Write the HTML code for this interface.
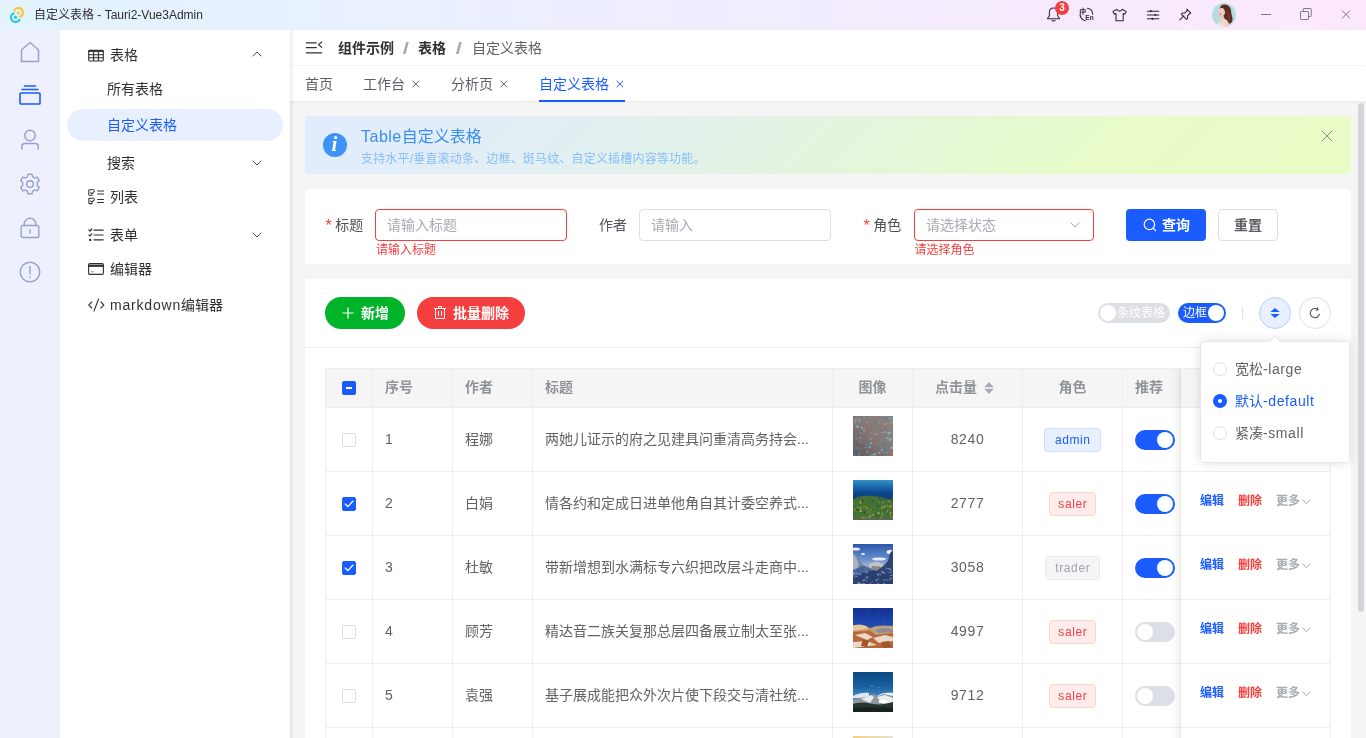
<!DOCTYPE html>
<html lang="zh-CN">
<head>
<meta charset="utf-8">
<title>自定义表格 - Tauri2-Vue3Admin</title>
<style>
*{box-sizing:border-box;margin:0;padding:0}
html,body{width:1366px;height:738px;overflow:hidden;background:#f5f5f5}
body{font-family:"Liberation Sans","Noto Sans CJK SC",sans-serif;font-size:14px;color:#303133;position:relative;-webkit-font-smoothing:antialiased}
.abs{position:absolute}
svg{display:block}
/* ---------- title bar ---------- */
#titlebar{position:absolute;left:0;top:0;width:1366px;height:30px;background:linear-gradient(90deg,#e2f3fe 0%,#efedfd 52%,#fce8fd 100%)}
#titlebar .ttl{position:absolute;left:34px;top:0;line-height:30px;font-size:12px;color:#2e2e30}
/* ---------- left icon bar ---------- */
#iconbar{position:absolute;left:0;top:30px;width:60px;height:708px;background:#eef0fe}
#iconbar svg{position:absolute}
/* ---------- side menu ---------- */
#sidemenu{position:absolute;left:60px;top:30px;width:230px;height:708px;background:#fff;z-index:3}
#sidemenu:after{content:"";position:absolute;left:230px;top:0;width:5px;height:708px;background:linear-gradient(90deg,rgba(0,0,0,.07),rgba(0,0,0,.02) 60%,rgba(0,0,0,0))}
#sidemenu .mi{position:absolute;font-size:14px;line-height:20px;color:#303133;white-space:nowrap}
#sidemenu .pill{position:absolute;left:7px;top:79px;width:216px;height:32px;border-radius:16px;background:#e8efff}
#sidemenu svg{position:absolute}
/* ---------- header ---------- */
#crumb{position:absolute;left:290px;top:30px;width:1076px;height:36px;background:#fff;border-bottom:1px solid #f6f6f6}
#crumb span{position:absolute;top:8px;line-height:20px;font-size:14px;white-space:nowrap}
#tabs{position:absolute;left:290px;top:66px;width:1076px;height:35px;background:#fff;box-shadow:0 1px 2px rgba(0,0,0,.06)}
#tabs span{position:absolute;top:8px;line-height:20px;font-size:14px;color:#5c5f66;white-space:nowrap}
#tabs svg{position:absolute}
/* ---------- content ---------- */
#alert{position:absolute;left:305px;top:116px;width:1046px;height:58px;border-radius:4px;background:linear-gradient(135deg,#e1ecff 0%,#e2f0f0 30%,#e4f5dc 52%,#e8fbc8 76%,#e9fcc5 100%)}
#search{position:absolute;left:305px;top:189px;width:1046px;height:75px;border-radius:4px;background:#fff}
#card{position:absolute;left:305px;top:279px;width:1046px;height:470px;border-radius:4px;background:#fff}
.lbl{position:absolute;font-size:14px;line-height:20px;color:#505257;white-space:nowrap}
.inp{position:absolute;height:32px;border:1px solid #dcdfe6;border-radius:4px;background:#fff;font-size:14px;line-height:30px;color:#a8abb2;padding-left:11px;white-space:nowrap}
.inp.err{border-color:#f53f3f}
.errt{position:absolute;font-size:12px;line-height:14px;color:#f53f3f;white-space:nowrap}
.btn{position:absolute;height:32px;border-radius:4px;font-size:14px;font-weight:bold;line-height:32px;white-space:nowrap}

/* ---------- table card ---------- */
#card .pbtn{position:absolute;top:18px;height:32px;border-radius:16px;color:#fff;font-size:14px;font-weight:bold;line-height:32px;white-space:nowrap}
#tbl{position:absolute;left:20px;top:89px;width:1006px;height:400px;border-left:1px solid #ebeef5;border-top:1px solid #ebeef5;overflow:hidden}
#tbl .c{position:absolute;border-right:1px solid #ebeef5;border-bottom:1px solid #ebeef5;font-size:14px;color:#606266;white-space:nowrap;overflow:hidden}
#tbl .h{top:-1px;height:40px;background:#f5f5f6;color:#909399;font-weight:bold;line-height:38px;padding:0 12px}
#tbl .r{height:64px;line-height:62px;padding:0 12px;background:#fff}
#tbl .ctr{text-align:center}
.cb{position:absolute;left:17px;width:14px;height:14px;border:1px solid #dcdfe6;border-radius:2px;background:#fff}
.cb.on{background:#1a5cff;border-color:#1a5cff}
.tag{letter-spacing:.6px;text-indent:.6px;position:absolute;top:20px;height:24px;border-radius:4px;border:1px solid;font-size:12px;line-height:22px;text-align:center}
.tag.p{background:#e8efff;border-color:#d1dfff;color:#1a5cff}
.tag.d{background:#feecec;border-color:#fcd4d4;color:#f53f3f}
.tag.i{background:#f4f5f7;border-color:#e9e9ec;color:#a0a3aa}
.sw{position:absolute;left:12px;top:22px;width:40px;height:20px;border-radius:10px;background:#dcdfe6}
.sw i{position:absolute;left:2px;top:2px;width:16px;height:16px;border-radius:8px;background:#fff}
.sw.on{background:#1a5cff}
.sw.on i{left:22px}
.thumb{position:absolute;left:20px;top:8px;width:40px;height:40px;overflow:hidden}
.act{position:absolute;top:21px;font-size:12px;line-height:16px;font-weight:bold}
/* grayscale text antialiasing like the reference */
#crumb,#tabs,#sidemenu,#search,#card,#alert,#titlebar,#pop{will-change:transform}
.ls{letter-spacing:.6px}
</style>
</head>
<body>
<div id="titlebar">
  <svg class="abs" style="left:0;top:0" width="34" height="30" viewBox="0 0 34 30" fill="none">
    <path d="M14.070 11.080A4.600 4.600 0 1 1 19.410 17" stroke="#ffc131" stroke-width="2.100"/>
    <path d="M19.820 19.020A4.600 4.600 0 1 1 14.620 12.930" stroke="#24c8db" stroke-width="2.100"/>
    <circle cx="18.300" cy="12.700" r="1.500" fill="#ffc131"/>
    <circle cx="15.500" cy="17.200" r="1.600" fill="#24c8db"/>
  </svg>
  <div class="ttl">自定义表格 - Tauri2-Vue3Admin</div>
  <!-- bell / translate / shirt / sliders / pin : drawn in one overlay, local x = page x - 1040 -->
  <svg class="abs" style="left:1040px;top:0" width="160" height="30" viewBox="0 0 160 30" fill="none" stroke="#2b2b2e" stroke-width="1.050" stroke-linecap="round" stroke-linejoin="round">
    <path d="M13.500 7.900c-2.400 0-4.100 1.900-4.100 4.300v3.500l-1.800 2.500v.600h11.800v-.600l-1.800-2.500v-3.500c0-2.400-1.700-4.300-4.100-4.300z"/>
    <path d="M12 20.300c.4.500.9.700 1.500.7s1.100-.2 1.500-.7"/>
    <!-- translate -->
    <path d="M47.400 8.300A6.300 6.300 0 0 1 52.700 14.200"/>
    <path d="M40.300 12.900A6.300 6.300 0 0 0 45.200 20.700"/>
    <path d="M40.700 9.600h4.600v2.600h-4.600zM43 8.100v6.400" stroke-width=".9"/>
    <text x="45.300" y="20.400" font-family="Liberation Sans,sans-serif" font-size="6.500" font-weight="bold" fill="#2b2b2e" stroke="none">En</text>
    <!-- shirt -->
    <path d="M77 9.300l-4.100 2.300 1.500 2.700 1.600-.8v7.200h7.200v-7.200l1.600.8 1.500-2.700-4.100-2.300c-.4 1.200-1.300 1.800-2.600 1.800s-2.200-.6-2.600-1.800z"/>
    <!-- sliders -->
    <path d="M107.400 11.200h11.400M107.400 15h11.400M107.400 18.800h11.400"/>
    <circle cx="110.800" cy="11.200" r="1.100" fill="#2b2b2e" stroke="none"/><circle cx="115.400" cy="15" r="1.100" fill="#2b2b2e" stroke="none"/><circle cx="112.400" cy="18.800" r="1.100" fill="#2b2b2e" stroke="none"/>
    <!-- pin -->
    <path d="M146.800 9.200l4 4-1.100.4-2.200 2.200.1 2.500-1.100 1.100-5.300-5.300 1.100-1.100 2.500.1 2.200-2.200z"/>
    <path d="M143.800 15.900l-4 4"/>
  </svg>
  <div class="abs" style="left:1055px;top:1px;width:14px;height:14px;border-radius:7px;background:#f53f3f;color:#fff;font-size:10px;line-height:14px;text-align:center;font-weight:bold">3</div>
  <!-- avatar -->
  <svg class="abs" style="left:1212px;top:3px" width="24" height="24" viewBox="0 0 24 24">
    <defs><clipPath id="avc"><circle cx="12" cy="12" r="12"/></clipPath><filter id="avb"><feGaussianBlur stdDeviation=".45"/></filter></defs>
    <g clip-path="url(#avc)"><rect width="24" height="24" fill="#b6dbe0"/>
      <g filter="url(#avb)">
        <path d="M9 2.500c3-2 8-1 9.500 3 1 3 .5 5 1.500 7.500 1 3 .5 5.500-1 7-1.500 1.200-4 .5-5-1.500L11 12 7.500 6z" fill="#5b2a22"/>
        <path d="M15 9c2 2 3 5 2.500 8.500" stroke="#7b3f30" stroke-width="1.200" fill="none"/>
        <ellipse cx="9.800" cy="9" rx="3.100" ry="4" fill="#f1cfbc" transform="rotate(-12 9.800 9)"/>
        <path d="M6 14l3-1.500 2 1.500-.5 3z" fill="#efcab6"/>
        <path d="M5 25c0-5 2-8 6.500-9 2.500 0 4.500 1.500 5 4l.5 5z" fill="#f0d3c3"/>
        <circle cx="8.300" cy="11.300" r=".7" fill="#c2314a"/>
        <path d="M4.500 21c2-1 5-1 7 1v3h-7z" fill="#dfeeee"/>
      </g>
    </g>
  </svg>
  <!-- window controls -->
  <svg class="abs" style="left:1260px;top:8px" width="12" height="12" viewBox="0 0 12 12" fill="none" stroke="#7d7a85" stroke-width="1"><path d="M1 6.500h10"/></svg>
  <svg class="abs" style="left:1299px;top:7px" width="14" height="14" viewBox="0 0 14 14" fill="none" stroke="#7d7a85" stroke-width="1" stroke-linejoin="round"><rect x="1.500" y="4.500" width="8" height="8" rx=".6"/><path d="M4.200 4.500V2.100c0-.4.200-.6.600-.6h6.800c.4 0 .6.200.6.600v6.800c0 .4-.2.600-.6.600H9.500"/></svg>
  <svg class="abs" style="left:1341px;top:9px" width="10" height="10" viewBox="0 0 10 10" fill="none" stroke="#7d7a85" stroke-width="1"><path d="M1 1.500l8 8M9 1.500l-8 8"/></svg>
</div>
<div id="iconbar">
  <!-- home -->
  <svg style="left:20px;top:11px" width="20" height="22" viewBox="0 0 20 22" fill="none" stroke="#94a1d2" stroke-width="1.500" stroke-linejoin="round"><path d="M10 1.500L1.500 9v11.500h17V9z"/></svg>
  <!-- layers (active) -->
  <svg style="left:19px;top:55px" width="22" height="20" viewBox="0 0 22 20" fill="none" stroke="#1a5cff" stroke-width="1.600" stroke-linecap="round" stroke-linejoin="round"><path d="M5.500 1h11M3 4.500h16"/><rect x="1" y="8" width="20" height="11" rx=".8"/></svg>
  <!-- user -->
  <svg style="left:20px;top:99px" width="20" height="21" viewBox="0 0 20 21" fill="none" stroke="#94a1d2" stroke-width="1.500" stroke-linecap="round"><circle cx="10" cy="6.500" r="5.200"/><path d="M1.800 20v-2.500c0-1.700 1.300-3 3-3h10.400c1.700 0 3 1.300 3 3V20"/></svg>
  <!-- gear -->
  <svg style="left:19px;top:143px" width="22" height="22" viewBox="0 0 22 22" fill="none" stroke="#94a1d2" stroke-width="1.400" stroke-linejoin="round"><path d="M9 1.200h4l.7 2.700 1.900 1.100 2.700-.8 2 3.500-2 1.900v2.800l2 1.900-2 3.500-2.700-.8-1.900 1.100-.7 2.700H9l-.7-2.700-1.900-1.100-2.700.8-2-3.500 2-1.900V9.600l-2-1.900 2-3.500 2.700.8 1.900-1.100z"/><circle cx="11" cy="11" r="3.300"/></svg>
  <!-- lock -->
  <svg style="left:20px;top:187px" width="20" height="22" viewBox="0 0 20 22" fill="none" stroke="#94a1d2" stroke-width="1.400" stroke-linecap="round"><rect x="1.200" y="8.500" width="17.600" height="12" rx="1.800"/><path d="M4.200 8.500V7a5.800 5.800 0 0 1 11.600 0v1.500M10 12.800v3.400"/></svg>
  <!-- info circle -->
  <svg style="left:19px;top:231px" width="22" height="22" viewBox="0 0 22 22" fill="none" stroke="#94a1d2" stroke-width="1.400" stroke-linecap="round"><circle cx="11" cy="11" r="9.800"/><path d="M11 5.500v7.500M11 16v.6"/></svg>
</div>
<div id="sidemenu">
  <div class="pill"></div>
  <!-- table icon -->
  <svg style="left:28px;top:19px" width="16" height="13" viewBox="0 0 16 13" fill="none" stroke="#303133" stroke-width="1.100"><rect x=".7" y="1.200" width="14.600" height="10.800" rx=".9"/><path d="M.7 2h14.600" stroke-width="1.900"/><path d="M.7 5.700h14.600M.7 8.800h14.600M5.600 3v9M10.400 3v9"/></svg>
  <div class="mi" style="left:50px;top:15px">表格</div>
  <svg style="left:192px;top:21px" width="10" height="6" viewBox="0 0 10 6" fill="none" stroke="#45484d" stroke-width=".95" stroke-linecap="round" stroke-linejoin="round"><path d="M1 5l4-4 4 4"/></svg>
  <div class="mi" style="left:47px;top:49px">所有表格</div>
  <div class="mi" style="left:47px;top:85px;color:#1a5cff">自定义表格</div>
  <div class="mi" style="left:47px;top:123px">搜索</div>
  <svg style="left:192px;top:130px" width="10" height="6" viewBox="0 0 10 6" fill="none" stroke="#45484d" stroke-width=".95" stroke-linecap="round" stroke-linejoin="round"><path d="M1 1l4 4 4-4"/></svg>
  <!-- list icon -->
  <svg style="left:28px;top:159px" width="16" height="16" viewBox="0 0 16 16" fill="none" stroke="#303133" stroke-width="1.050" stroke-linecap="round" stroke-linejoin="round"><path d="M6 .8H1.600c-.5 0-.8.300-.8.800v3.800c0 .5.300.8.800.8h2.600M2.600 3.500l1.300 1.300 2.600-2.600M6 9.200H1.600c-.5 0-.8.300-.8.800v3.800c0 .5.300.8.800.8h2.600M2.600 11.900l1.300 1.300 2.600-2.600M9.600 2h6M9.600 5h6M9.600 10.400h6M9.600 13.400h6"/></svg>
  <div class="mi" style="left:50px;top:157px">列表</div>
  <!-- form icon -->
  <svg style="left:28px;top:198px" width="16" height="14" viewBox="0 0 16 14" fill="none" stroke="#303133" stroke-width="1.200" stroke-linecap="round" stroke-linejoin="round"><path d="M6 2.200h9.200M6 7h9.200M6 11.800h9.200M1 2l1 1 1.800-2M1 6.800l1 1 1.800-2"/><circle cx="2.200" cy="11.900" r=".6" fill="#303133"/></svg>
  <div class="mi" style="left:50px;top:195px">表单</div>
  <svg style="left:192px;top:202px" width="10" height="6" viewBox="0 0 10 6" fill="none" stroke="#45484d" stroke-width=".95" stroke-linecap="round" stroke-linejoin="round"><path d="M1 1l4 4 4-4"/></svg>
  <!-- editor icon -->
  <svg style="left:28px;top:233px" width="16" height="12" viewBox="0 0 16 12" fill="none" stroke="#303133" stroke-width="1.100"><rect x=".600" y=".600" width="14.800" height="10.800" rx="1.200"/><path d="M.6 2.800h14.800" stroke-width="2.200"/><path d="M2.800 8.800h3" stroke-width=".8" stroke="#777"/></svg>
  <div class="mi" style="left:50px;top:229px">编辑器</div>
  <!-- code icon -->
  <svg style="left:28px;top:268px" width="17" height="14" viewBox="0 0 17 14" fill="none" stroke="#303133" stroke-width="1.100" stroke-linecap="round" stroke-linejoin="round"><path d="M3.800 3.800L.8 7l3 3.200M12.800 3.800l3 3.200-3 3.200M10.600 1L6 13"/></svg>
  <div class="mi" style="left:50px;top:265px"><span style="letter-spacing:.8px">markdown</span>编辑器</div>
</div>
<div id="crumb">
  <svg class="abs" style="left:15px;top:10px" width="18" height="15" viewBox="0 0 18 15" fill="none" stroke="#303133" stroke-width="1.200" stroke-linecap="round" stroke-linejoin="round"><path d="M1.300 2.800h10M1.300 7.600h10M1.300 12.800h15.400M16.700 2l-3.300 2.600 3.300 2.600"/></svg>
  <span style="left:48px;font-weight:bold;color:#303133">组件示例</span>
  <span style="left:113px;top:9px;width:6px;text-align:center;color:#a8abb2;font-size:16px;font-weight:bold;transform:scaleX(1.400)">/</span>
  <span style="left:128px;font-weight:bold;color:#303133">表格</span>
  <span style="left:166px;top:9px;width:6px;text-align:center;color:#a8abb2;font-size:16px;font-weight:bold;transform:scaleX(1.400)">/</span>
  <span style="left:182px;color:#606266">自定义表格</span>
</div>
<div id="tabs">
  <span style="left:15px">首页</span>
  <span style="left:73px">工作台</span>
  <svg style="left:122px;top:14px" width="8" height="8" viewBox="0 0 8 8" fill="none" stroke="#5c5f66" stroke-width="1"><path d="M.6.800l6.400 6.400M7 .8L.6 7.200"/></svg>
  <span style="left:161px">分析页</span>
  <svg style="left:210px;top:14px" width="8" height="8" viewBox="0 0 8 8" fill="none" stroke="#5c5f66" stroke-width="1"><path d="M.6.800l6.400 6.400M7 .8L.6 7.200"/></svg>
  <span style="left:249px;color:#1a5cff">自定义表格</span>
  <svg style="left:326px;top:14px" width="8" height="8" viewBox="0 0 8 8" fill="none" stroke="#1a5cff" stroke-width="1"><path d="M.6.800l6.400 6.400M7 .8L.6 7.200"/></svg>
  <div class="abs" style="left:249px;top:34px;width:86px;height:2px;background:#1a5cff"></div>
</div>
<div id="alert">
  <div class="abs" style="left:18px;top:17px;width:24px;height:24px;border-radius:12px;background:#3d94f6;color:#fff;font-family:'Liberation Serif',serif;font-style:italic;font-weight:bold;font-size:21px;line-height:23px;text-align:center;text-indent:-1px">i</div>
  <div class="abs" style="left:56px;top:10px;font-size:16px;line-height:22px;color:#3a8ef0;white-space:nowrap"><span style="letter-spacing:.5px">Table</span>自定义表格</div>
  <div class="abs" style="left:56px;top:35px;font-size:12px;line-height:16px;color:#86bdfa;white-space:nowrap;letter-spacing:.18px">支持水平/垂直滚动条、边框、斑马纹、自定义插槽内容等功能。</div>
  <svg class="abs" style="left:1016px;top:14px" width="12" height="12" viewBox="0 0 12 12" fill="none" stroke="#8a8f99" stroke-width="1"><path d="M.8.800l10.400 10.400M11.200.8L.8 11.200"/></svg>
</div>
<div id="search">
  <div class="lbl" style="left:21px;top:26px"><span style="color:#f53f3f;margin-right:3.500px;margin-left:-.5px;font-size:16px;line-height:14px;position:relative;top:1px">*</span>标题</div>
  <div class="inp err" style="left:70px;top:20px;width:192px">请输入标题</div>
  <div class="errt" style="left:71px;top:54px">请输入标题</div>
  <div class="lbl" style="left:294px;top:26px">作者</div>
  <div class="inp" style="left:334px;top:20px;width:192px">请输入</div>
  <div class="lbl" style="left:559px;top:26px"><span style="color:#f53f3f;margin-right:3.500px;margin-left:-.5px;font-size:16px;line-height:14px;position:relative;top:1px">*</span>角色</div>
  <div class="inp err" style="left:609px;top:20px;width:180px">请选择状态
    <svg class="abs" style="left:155px;top:12px" width="10" height="6" viewBox="0 0 10 6" fill="none" stroke="#a8abb2" stroke-width="1" stroke-linecap="round" stroke-linejoin="round"><path d="M.8.800L5 5l4.200-4.200"/></svg>
  </div>
  <div class="errt" style="left:609.500px;top:54px">请选择角色</div>
  <div class="btn" style="left:821px;top:20px;width:80px;background:#1a5cff;color:#fff">
    <svg class="abs" style="left:17px;top:9px" width="14" height="14" viewBox="0 0 14 14" fill="none" stroke="#fff" stroke-width="1.200" stroke-linecap="round"><circle cx="6.400" cy="6.400" r="5.200"/><path d="M10.300 10.300l2.400 2.400"/></svg>
    <span class="abs" style="left:36px;top:0">查询</span>
  </div>
  <div class="btn" style="left:913px;top:20px;width:60px;background:#fff;border:1px solid #dcdfe6;color:#5a5c61;text-align:center;line-height:30px">重置</div>
</div>
<div id="card">
  <div class="pbtn" style="left:20px;width:80px;background:#00b42a">
    <svg class="abs" style="left:17px;top:10px" width="12" height="12" viewBox="0 0 12 12" fill="none" stroke="#fff" stroke-width="1.200"><path d="M6 .5v11M.5 6h11"/></svg>
    <span class="abs" style="left:36px;top:0">新增</span>
  </div>
  <div class="pbtn" style="left:112px;width:108px;background:#f53f3f">
    <svg class="abs" style="left:17px;top:9px" width="12" height="13" viewBox="0 0 12 13" fill="none" stroke="#fff" stroke-width="1"><path d="M0 2.500h12M4.500 2.500V.5h3v2M1.500 2.500v10h9v-10M4.500 5v5M7.500 5v5"/></svg>
    <span class="abs" style="left:36px;top:0">批量删除</span>
  </div>
  <!-- toolbar right -->
  <div class="abs" style="left:793px;top:24px;width:72px;height:20px;border-radius:10px;background:#dcdfe6;color:#fff;font-size:12px;line-height:20px">
    <i class="abs" style="left:2px;top:2px;width:16px;height:16px;border-radius:8px;background:#fff"></i>
    <span class="abs" style="left:19px;top:0">条纹表格</span>
  </div>
  <div class="abs" style="left:873px;top:24px;width:48px;height:20px;border-radius:10px;background:#1a5cff;color:#fff;font-size:12px;line-height:20px">
    <span class="abs" style="left:5px;top:0">边框</span>
    <i class="abs" style="left:30px;top:2px;width:16px;height:16px;border-radius:8px;background:#fff"></i>
  </div>
  <div class="abs" style="left:937px;top:28px;width:1px;height:12px;background:#dcdfe6"></div>
  <div class="abs" style="left:954px;top:18px;width:32px;height:32px;border-radius:16px;background:#e8efff;border:1px solid #bacfff">
    <svg class="abs" style="left:10px;top:10px" width="10" height="10" viewBox="0 0 10 10"><path d="M5 0l4.700 4H.3zM5 10L.3 6h9.400z" fill="#1a5cff"/></svg>
  </div>
  <div class="abs" style="left:994px;top:18px;width:32px;height:32px;border-radius:16px;background:#fff;border:1px solid #dcdfe6">
    <svg class="abs" style="left:9px;top:9px" width="12" height="12" viewBox="0 0 12 12" fill="none" stroke="#505257" stroke-width="1.100" stroke-linecap="round" stroke-linejoin="round"><path d="M10.400 7.200A4.600 4.600 0 1 1 8.800 2.500"/><path d="M8.300.8l.7 1.900-1.900.6"/></svg>
  </div>
  <div class="abs" style="left:0;top:68px;width:1046px;height:1px;background:#ebeef5"></div>
  <div id="tbl">
    <div class="abs" style="left:845px;top:0;width:10px;height:400px;z-index:3;box-shadow:inset -10px 0 10px -10px rgba(0,0,0,.17)"></div>
    <div class="c h" style="left:-1px;width:48px"><span class="cb on" style="top:13px"><i class="abs" style="left:3px;top:5px;width:6px;height:2px;background:#fff"></i></span></div>
    <div class="c h" style="left:47px;width:80px">序号</div>
    <div class="c h" style="left:127px;width:80px">作者</div>
    <div class="c h" style="left:207px;width:300px">标题</div>
    <div class="c h ctr" style="left:507px;width:80px">图像</div>
    <div class="c h" style="left:587px;width:110px;padding:0"><span class="abs" style="left:22px;top:0">点击量</span><svg class="abs" style="left:71px;top:13px" width="10" height="14" viewBox="0 0 10 14"><path d="M5 1L9.800 6.200H.2zM5 13L.2 7.800h9.600z" fill="#a8abb2"/></svg></div>
    <div class="c h ctr" style="left:697px;width:100px">角色</div>
    <div class="c h" style="left:797px;width:80px">推荐</div>
    <div class="c h ctr" style="left:855px;width:150px;z-index:2">操作</div>
    <div class="c r" style="left:-1px;top:39px;width:48px"><span class="cb" style="top:25px"></span></div>
    <div class="c r" style="left:47px;top:39px;width:80px">1</div>
    <div class="c r" style="left:127px;top:39px;width:80px">程娜</div>
    <div class="c r" style="left:207px;top:39px;width:300px">两她儿证示的府之见建具问重清高务持会...</div>
    <div class="c r ctr" style="left:507px;top:39px;width:80px"><svg class="thumb" viewBox="0 0 40 40"><defs><linearGradient id="g1" x1="1" y1="0" x2="0" y2="1"><stop offset="0" stop-color="#94817c"/><stop offset=".55" stop-color="#85746f"/><stop offset="1" stop-color="#5e5661"/></linearGradient><filter id="b1"><feGaussianBlur stdDeviation=".4"/></filter></defs><rect width="40" height="40" fill="url(#g1)"/><g filter="url(#b1)"><ellipse cx="2.7" cy="4.0" rx="1.4" ry="1.1" fill="#7ba9b9"/><ellipse cx="6.4" cy="3.6" rx="1.4" ry="1.1" fill="#7ba9b9"/><ellipse cx="11.0" cy="1.8" rx="1.0" ry="0.8" fill="#6d9fb2"/><ellipse cx="17.1" cy="2.3" rx="1.7" ry="1.3" fill="#5b8da3"/><ellipse cx="23.7" cy="0.9" rx="0.9" ry="0.7" fill="#5b8da3"/><ellipse cx="28.5" cy="1.9" rx="1.5" ry="1.2" fill="#5b8da3"/><ellipse cx="33.0" cy="2.5" rx="1.6" ry="1.2" fill="#4f8299"/><ellipse cx="37.2" cy="2.7" rx="1.9" ry="1.4" fill="#6d9fb2"/><ellipse cx="1.8" cy="6.5" rx="1.2" ry="0.9" fill="#6d9fb2"/><ellipse cx="6.1" cy="6.1" rx="1.2" ry="0.9" fill="#6d9fb2"/><ellipse cx="13.8" cy="5.7" rx="1.1" ry="0.9" fill="#6d9fb2"/><ellipse cx="19.2" cy="7.1" rx="1.0" ry="0.8" fill="#5b8da3"/><ellipse cx="21.7" cy="6.0" rx="1.3" ry="1.0" fill="#4f8299"/><ellipse cx="26.1" cy="6.6" rx="1.0" ry="0.8" fill="#6d9fb2"/><ellipse cx="32.5" cy="8.2" rx="1.1" ry="0.9" fill="#7ba9b9"/><ellipse cx="38.3" cy="6.2" rx="1.6" ry="1.2" fill="#6d9fb2"/><ellipse cx="4.3" cy="10.7" rx="1.8" ry="1.4" fill="#7ba9b9"/><ellipse cx="8.9" cy="11.5" rx="1.3" ry="1.0" fill="#7ba9b9"/><ellipse cx="11.1" cy="14.3" rx="1.1" ry="0.9" fill="#82b0bf"/><ellipse cx="23.7" cy="12.1" rx="1.0" ry="0.8" fill="#5b8da3"/><ellipse cx="26.6" cy="12.9" rx="1.3" ry="1.0" fill="#4f8299"/><ellipse cx="32.8" cy="13.7" rx="1.1" ry="0.8" fill="#4f8299"/><ellipse cx="36.3" cy="14.0" rx="1.8" ry="1.4" fill="#5b8da3"/><ellipse cx="1.3" cy="18.0" rx="1.5" ry="1.1" fill="#4f8299"/><ellipse cx="7.9" cy="17.2" rx="1.0" ry="0.8" fill="#6d9fb2"/><ellipse cx="11.6" cy="18.4" rx="1.3" ry="1.0" fill="#4f8299"/><ellipse cx="17.8" cy="16.8" rx="1.1" ry="0.8" fill="#6d9fb2"/><ellipse cx="22.4" cy="18.1" rx="1.6" ry="1.2" fill="#6d9fb2"/><ellipse cx="29.0" cy="16.4" rx="0.9" ry="0.7" fill="#82b0bf"/><ellipse cx="31.6" cy="15.9" rx="1.2" ry="0.9" fill="#7ba9b9"/><ellipse cx="36.2" cy="17.0" rx="1.8" ry="1.4" fill="#82b0bf"/><ellipse cx="3.2" cy="22.8" rx="1.1" ry="0.8" fill="#6d9fb2"/><ellipse cx="7.4" cy="22.0" rx="1.2" ry="0.9" fill="#6d9fb2"/><ellipse cx="17.4" cy="23.3" rx="1.2" ry="1.0" fill="#6d9fb2"/><ellipse cx="28.4" cy="23.9" rx="1.7" ry="1.3" fill="#5b8da3"/><ellipse cx="34.0" cy="22.0" rx="1.6" ry="1.2" fill="#6d9fb2"/><ellipse cx="37.2" cy="23.5" rx="1.8" ry="1.4" fill="#7ba9b9"/><ellipse cx="7.1" cy="25.7" rx="1.0" ry="0.8" fill="#6d9fb2"/><ellipse cx="14.3" cy="28.9" rx="1.7" ry="1.3" fill="#4f8299"/><ellipse cx="18.2" cy="27.3" rx="1.4" ry="1.1" fill="#7ba9b9"/><ellipse cx="25.8" cy="27.9" rx="1.4" ry="1.1" fill="#5b8da3"/><ellipse cx="31.1" cy="28.5" rx="1.6" ry="1.2" fill="#4f8299"/><ellipse cx="35.7" cy="26.8" rx="1.6" ry="1.2" fill="#5b8da3"/><ellipse cx="3.4" cy="31.9" rx="1.9" ry="1.4" fill="#4f8299"/><ellipse cx="6.9" cy="33.1" rx="1.1" ry="0.9" fill="#4f8299"/><ellipse cx="13.4" cy="31.4" rx="1.1" ry="0.9" fill="#5b8da3"/><ellipse cx="16.8" cy="31.2" rx="1.4" ry="1.1" fill="#6d9fb2"/><ellipse cx="24.1" cy="31.7" rx="1.1" ry="0.8" fill="#4f8299"/><ellipse cx="29.0" cy="33.7" rx="1.3" ry="1.0" fill="#7ba9b9"/><ellipse cx="31.8" cy="33.7" rx="1.9" ry="1.5" fill="#4f8299"/><ellipse cx="38.7" cy="31.7" rx="1.5" ry="1.2" fill="#82b0bf"/><ellipse cx="1.8" cy="38.5" rx="0.9" ry="0.7" fill="#5b8da3"/><ellipse cx="6.4" cy="38.5" rx="1.2" ry="0.9" fill="#5b8da3"/><ellipse cx="14.2" cy="36.1" rx="1.0" ry="0.8" fill="#7ba9b9"/><ellipse cx="18.6" cy="39.2" rx="1.6" ry="1.2" fill="#5b8da3"/><ellipse cx="21.6" cy="38.3" rx="1.7" ry="1.3" fill="#7ba9b9"/><ellipse cx="26.3" cy="36.7" rx="1.3" ry="1.0" fill="#7ba9b9"/><ellipse cx="34.3" cy="36.3" rx="1.8" ry="1.4" fill="#5b8da3"/></g></svg></div>
    <div class="c r ctr" style="left:587px;top:39px;width:110px"><span class="ls">8240</span></div>
    <div class="c r ctr" style="left:697px;top:39px;width:100px"><span class="tag p" style="left:21px;width:57px">admin</span></div>
    <div class="c r" style="left:797px;top:39px;width:80px"><span class="sw on"><i></i></span></div>
    <div class="c r" style="left:855px;top:39px;width:150px;z-index:2"><span class="act" style="left:19px;color:#1a5cff">编辑</span><span class="act" style="left:57px;color:#f53f3f">删除</span><span class="act" style="left:95px;color:#a8abb2">更多</span><svg class="abs" style="left:121px;top:27px" width="9" height="6" viewBox="0 0 9 6" fill="none" stroke="#a8abb2" stroke-width="1" stroke-linecap="round" stroke-linejoin="round"><path d="M.7.800l3.800 3.800L8.300.8"/></svg></div>
    <div class="c r" style="left:-1px;top:103px;width:48px"><span class="cb on" style="top:25px"><svg class="abs" style="left:1px;top:2px" width="10" height="8" viewBox="0 0 10 8" fill="none" stroke="#fff" stroke-width="1.300" stroke-linecap="round" stroke-linejoin="round"><path d="M1.200 4l2.600 2.600L8.800 1.200"/></svg></span></div>
    <div class="c r" style="left:47px;top:103px;width:80px">2</div>
    <div class="c r" style="left:127px;top:103px;width:80px">白娟</div>
    <div class="c r" style="left:207px;top:103px;width:300px">情各约和定成日进单他角自其计委空养式...</div>
    <div class="c r ctr" style="left:507px;top:103px;width:80px"><svg class="thumb" viewBox="0 0 40 40"><defs><linearGradient id="g2" x1="0" y1="0" x2="0" y2="1"><stop offset="0" stop-color="#3593c6"/><stop offset=".14" stop-color="#1e6fb0"/><stop offset=".3" stop-color="#0f4a93"/><stop offset=".5" stop-color="#0d397a"/></linearGradient><filter id="b2"><feGaussianBlur stdDeviation=".5"/></filter></defs><rect width="40" height="40" fill="url(#g2)"/><g filter="url(#b2)"><path d="M-2 21C4 16 12 15.500 20 16s14 3 22 5v21H-2z" fill="#436f35"/><circle cx="37.3" cy="33.9" r="0.9" fill="#a8963c"/><circle cx="7.9" cy="37.5" r="0.9" fill="#5f8a3c"/><circle cx="22.8" cy="37.3" r="0.9" fill="#b9a046"/><circle cx="26.1" cy="22.5" r="0.7" fill="#355f2e"/><circle cx="36.0" cy="39.6" r="1.0" fill="#2b5129"/><circle cx="31.6" cy="25.0" r="0.8" fill="#5f8a3c"/><circle cx="3.3" cy="27.7" r="1.1" fill="#4c7636"/><circle cx="19.5" cy="18.6" r="0.9" fill="#355f2e"/><circle cx="1.4" cy="29.7" r="0.9" fill="#a8963c"/><circle cx="40.0" cy="37.8" r="1.3" fill="#6a7a4a"/><circle cx="19.7" cy="38.9" r="1.1" fill="#355f2e"/><circle cx="17.6" cy="30.3" r="1.0" fill="#a8963c"/><circle cx="33.7" cy="30.3" r="1.1" fill="#2b5129"/><circle cx="38.2" cy="37.1" r="0.8" fill="#7b9944"/><circle cx="5.6" cy="30.0" r="1.0" fill="#2b5129"/><circle cx="8.0" cy="29.8" r="1.0" fill="#5f8a3c"/><circle cx="1.1" cy="39.3" r="1.0" fill="#4c7636"/><circle cx="39.6" cy="20.7" r="1.1" fill="#355f2e"/><circle cx="2.6" cy="29.9" r="1.2" fill="#4c7636"/><circle cx="32.0" cy="26.9" r="0.9" fill="#7b9944"/><circle cx="5.1" cy="27.5" r="1.0" fill="#6a7a4a"/><circle cx="4.3" cy="27.2" r="1.2" fill="#5f8a3c"/><circle cx="5.2" cy="35.1" r="0.6" fill="#5f8a3c"/><circle cx="6.2" cy="18.3" r="0.8" fill="#2b5129"/><circle cx="14.2" cy="31.6" r="0.9" fill="#355f2e"/><circle cx="23.3" cy="36.7" r="1.1" fill="#2b5129"/><circle cx="28.1" cy="37.3" r="0.9" fill="#5f8a3c"/><circle cx="16.5" cy="29.6" r="1.0" fill="#a8963c"/><circle cx="34.6" cy="29.7" r="1.0" fill="#7b9944"/><circle cx="34.1" cy="31.5" r="0.8" fill="#a8963c"/><circle cx="29.6" cy="35.8" r="0.8" fill="#a8963c"/><circle cx="12.6" cy="38.3" r="1.1" fill="#7b9944"/><circle cx="7.8" cy="20.1" r="0.7" fill="#7b9944"/><circle cx="3.5" cy="26.5" r="1.2" fill="#4c7636"/><circle cx="16.9" cy="35.4" r="0.7" fill="#a8963c"/><circle cx="25.1" cy="35.6" r="0.7" fill="#355f2e"/><circle cx="27.3" cy="38.1" r="0.7" fill="#b9a046"/><circle cx="20.2" cy="34.7" r="1.2" fill="#7b9944"/><circle cx="19.3" cy="18.5" r="0.7" fill="#6a7a4a"/><circle cx="7.4" cy="22.5" r="1.3" fill="#a8963c"/><circle cx="37.1" cy="20.1" r="0.7" fill="#5f8a3c"/><circle cx="27.2" cy="19.7" r="0.8" fill="#355f2e"/><circle cx="18.7" cy="29.3" r="0.7" fill="#4c7636"/><circle cx="14.9" cy="31.9" r="1.2" fill="#5f8a3c"/><circle cx="7.3" cy="28.0" r="0.9" fill="#b9a046"/><circle cx="7.8" cy="21.6" r="0.8" fill="#5f8a3c"/><circle cx="3.4" cy="36.5" r="1.0" fill="#4c7636"/><circle cx="7.6" cy="30.9" r="1.2" fill="#b9a046"/><circle cx="10.3" cy="38.0" r="1.2" fill="#a8963c"/><circle cx="16.2" cy="37.7" r="1.1" fill="#b9a046"/><circle cx="30.6" cy="26.9" r="0.6" fill="#a8963c"/><circle cx="13.7" cy="28.3" r="1.2" fill="#5f8a3c"/><circle cx="39.6" cy="37.9" r="0.8" fill="#5f8a3c"/><circle cx="37.8" cy="32.7" r="0.8" fill="#b9a046"/><circle cx="16.2" cy="22.0" r="0.9" fill="#355f2e"/><circle cx="40.0" cy="32.1" r="1.1" fill="#355f2e"/><circle cx="39.2" cy="18.5" r="1.1" fill="#355f2e"/><circle cx="10.3" cy="26.8" r="1.1" fill="#5f8a3c"/><circle cx="25.9" cy="18.2" r="0.8" fill="#2b5129"/><circle cx="36.2" cy="30.1" r="1.3" fill="#4c7636"/><circle cx="22.7" cy="39.9" r="1.2" fill="#6a7a4a"/><circle cx="3.0" cy="31.1" r="0.9" fill="#5f8a3c"/><circle cx="37.5" cy="26.5" r="1.2" fill="#a8963c"/><circle cx="21.7" cy="31.1" r="1.3" fill="#4c7636"/><circle cx="16.8" cy="29.6" r="0.9" fill="#2b5129"/><circle cx="11.4" cy="32.4" r="1.1" fill="#2b5129"/><circle cx="29.9" cy="18.6" r="1.0" fill="#7b9944"/><circle cx="25.3" cy="27.0" r="0.6" fill="#4c7636"/><circle cx="12.6" cy="26.8" r="0.7" fill="#b9a046"/><circle cx="36.2" cy="27.4" r="0.8" fill="#6a7a4a"/><circle cx="30.2" cy="19.0" r="1.3" fill="#355f2e"/><circle cx="28.9" cy="28.3" r="1.0" fill="#7b9944"/><circle cx="4.6" cy="31.7" r="0.7" fill="#6a7a4a"/><circle cx="34.4" cy="25.8" r="0.7" fill="#a8963c"/><circle cx="17.7" cy="32.7" r="1.0" fill="#6a7a4a"/><circle cx="25.6" cy="33.0" r="1.1" fill="#b9a046"/><circle cx="21.2" cy="39.9" r="1.1" fill="#2b5129"/><circle cx="9.5" cy="20.5" r="1.1" fill="#2b5129"/><circle cx="25.0" cy="25.9" r="1.0" fill="#2b5129"/><circle cx="29.0" cy="33.4" r="1.0" fill="#7b9944"/><circle cx="30.1" cy="22.2" r="1.0" fill="#7b9944"/><circle cx="26.1" cy="22.3" r="1.0" fill="#5f8a3c"/><circle cx="0.4" cy="23.7" r="1.0" fill="#5f8a3c"/><circle cx="4.1" cy="29.9" r="1.1" fill="#355f2e"/><circle cx="36.5" cy="21.5" r="1.0" fill="#7b9944"/><circle cx="14.9" cy="28.5" r="0.8" fill="#7b9944"/><circle cx="19.8" cy="20.9" r="1.2" fill="#355f2e"/><circle cx="17.9" cy="36.1" r="0.9" fill="#7b9944"/><circle cx="29.9" cy="26.6" r="0.9" fill="#a8963c"/><circle cx="26.1" cy="39.8" r="0.8" fill="#b9a046"/><path d="M-2 38c6-1 10 1 16 0s8 1 14 .5 8-1 14-.5v4H-2z" fill="#5b6650"/></g></svg></div>
    <div class="c r ctr" style="left:587px;top:103px;width:110px"><span class="ls">2777</span></div>
    <div class="c r ctr" style="left:697px;top:103px;width:100px"><span class="tag d" style="left:26px;width:47px">saler</span></div>
    <div class="c r" style="left:797px;top:103px;width:80px"><span class="sw on"><i></i></span></div>
    <div class="c r" style="left:855px;top:103px;width:150px;z-index:2"><span class="act" style="left:19px;color:#1a5cff">编辑</span><span class="act" style="left:57px;color:#f53f3f">删除</span><span class="act" style="left:95px;color:#a8abb2">更多</span><svg class="abs" style="left:121px;top:27px" width="9" height="6" viewBox="0 0 9 6" fill="none" stroke="#a8abb2" stroke-width="1" stroke-linecap="round" stroke-linejoin="round"><path d="M.7.800l3.800 3.800L8.300.8"/></svg></div>
    <div class="c r" style="left:-1px;top:167px;width:48px"><span class="cb on" style="top:25px"><svg class="abs" style="left:1px;top:2px" width="10" height="8" viewBox="0 0 10 8" fill="none" stroke="#fff" stroke-width="1.300" stroke-linecap="round" stroke-linejoin="round"><path d="M1.200 4l2.600 2.600L8.800 1.200"/></svg></span></div>
    <div class="c r" style="left:47px;top:167px;width:80px">3</div>
    <div class="c r" style="left:127px;top:167px;width:80px">杜敏</div>
    <div class="c r" style="left:207px;top:167px;width:300px">带新增想到水满标专六织把改层斗走商中...</div>
    <div class="c r ctr" style="left:507px;top:167px;width:80px"><svg class="thumb" viewBox="0 0 40 40"><defs><linearGradient id="g3" x1="0" y1="0" x2="0" y2="1"><stop offset="0" stop-color="#2a57ab"/><stop offset=".4" stop-color="#6a92cf"/><stop offset=".55" stop-color="#a5bad8"/></linearGradient><filter id="b3"><feGaussianBlur stdDeviation=".5"/></filter></defs><rect width="40" height="40" fill="url(#g3)"/><g filter="url(#b3)"><ellipse cx="3" cy="5" rx="4" ry="1.600" fill="#e8eef8"/><ellipse cx="10" cy="10" rx="2" ry="1" fill="#e8eef8"/><ellipse cx="37" cy="8" rx="3.500" ry="2" fill="#eef2fa"/><ellipse cx="26" cy="15" rx="7" ry="1.600" fill="#e4ebf5"/><path d="M14 19l6-2 6 1 6 2 4 2v6H14z" fill="#93a5c4"/><path d="M16 20l8-2 8 3-6 5H16z" fill="#c2c7cf"/><path d="M18 22l8 0 4 3-10 1z" fill="#8f8a70"/><path d="M0 8l4 4 5 8 6 3 8 3-4 14H0z" fill="#76849e"/><path d="M0 10l3 3 3 7-2 6-4 4z" fill="#a9b3c6"/><path d="M40 6l-3 3-2 8-6 6-9 6-20 11h40z" fill="#2f4473"/><path d="M0 26l10-4 10 4-8 6-12 8z" fill="#4a639a"/><path d="M0 33l12-5 10-2 8 6 10-4v12H0z" fill="#2a3f70"/><ellipse cx="24.9" cy="35.4" rx="1.9" ry=".5" fill="#5f78ab" transform="rotate(-30 24.9 35.4)"/><ellipse cx="33.6" cy="36.0" rx="1.1" ry=".5" fill="#7f93bd" transform="rotate(-20 33.6 36.0)"/><ellipse cx="4.5" cy="30.4" rx="1.1" ry=".5" fill="#5f78ab" transform="rotate(-30 4.5 30.4)"/><ellipse cx="23.0" cy="22.2" rx="1.1" ry=".5" fill="#9fb0d0" transform="rotate(-20 23.0 22.2)"/><ellipse cx="36.7" cy="35.8" rx="1.0" ry=".5" fill="#7f93bd" transform="rotate(-20 36.7 35.8)"/><ellipse cx="24.7" cy="30.0" rx="1.0" ry=".5" fill="#7f93bd" transform="rotate(-20 24.7 30.0)"/><ellipse cx="30.9" cy="39.3" rx="1.0" ry=".5" fill="#7f93bd" transform="rotate(25 30.9 39.3)"/><ellipse cx="12.5" cy="25.6" rx="2.0" ry=".5" fill="#5f78ab" transform="rotate(-20 12.5 25.6)"/><ellipse cx="7.3" cy="39.4" rx="1.1" ry=".5" fill="#9fb0d0" transform="rotate(25 7.3 39.4)"/><ellipse cx="0.9" cy="29.5" rx="2.1" ry=".5" fill="#9fb0d0" transform="rotate(-30 0.9 29.5)"/><ellipse cx="13.3" cy="36.7" rx="1.6" ry=".5" fill="#5f78ab" transform="rotate(25 13.3 36.7)"/><ellipse cx="2.6" cy="28.4" rx="1.2" ry=".5" fill="#5f78ab" transform="rotate(25 2.6 28.4)"/><ellipse cx="7.4" cy="30.5" rx="1.0" ry=".5" fill="#9fb0d0" transform="rotate(-30 7.4 30.5)"/><ellipse cx="38.0" cy="28.4" rx="1.4" ry=".5" fill="#5f78ab" transform="rotate(35 38.0 28.4)"/><ellipse cx="14.6" cy="32.4" rx="0.8" ry=".5" fill="#7f93bd" transform="rotate(-20 14.6 32.4)"/><ellipse cx="24.9" cy="39.2" rx="1.0" ry=".5" fill="#7f93bd" transform="rotate(35 24.9 39.2)"/><ellipse cx="13.8" cy="28.4" rx="1.5" ry=".5" fill="#9fb0d0" transform="rotate(-30 13.8 28.4)"/><ellipse cx="23.6" cy="36.1" rx="1.3" ry=".5" fill="#9fb0d0" transform="rotate(-30 23.6 36.1)"/><ellipse cx="17.3" cy="39.6" rx="1.1" ry=".5" fill="#5f78ab" transform="rotate(25 17.3 39.6)"/><ellipse cx="36.7" cy="28.1" rx="2.1" ry=".5" fill="#5f78ab" transform="rotate(-30 36.7 28.1)"/><ellipse cx="12.5" cy="27.7" rx="1.0" ry=".5" fill="#7f93bd" transform="rotate(-20 12.5 27.7)"/><ellipse cx="28.8" cy="27.6" rx="1.5" ry=".5" fill="#5f78ab" transform="rotate(-30 28.8 27.6)"/><ellipse cx="3.2" cy="32.8" rx="2.1" ry=".5" fill="#7f93bd" transform="rotate(-20 3.2 32.8)"/><ellipse cx="29.6" cy="28.2" rx="1.2" ry=".5" fill="#5f78ab" transform="rotate(35 29.6 28.2)"/><ellipse cx="5.8" cy="39.6" rx="1.7" ry=".5" fill="#9fb0d0" transform="rotate(25 5.8 39.6)"/><ellipse cx="33.5" cy="24.4" rx="1.8" ry=".5" fill="#7f93bd" transform="rotate(35 33.5 24.4)"/><ellipse cx="4.3" cy="29.8" rx="1.0" ry=".5" fill="#9fb0d0" transform="rotate(25 4.3 29.8)"/><ellipse cx="5.6" cy="38.6" rx="1.7" ry=".5" fill="#7f93bd" transform="rotate(35 5.6 38.6)"/><ellipse cx="38.4" cy="34.4" rx="1.2" ry=".5" fill="#9fb0d0" transform="rotate(25 38.4 34.4)"/><ellipse cx="18.8" cy="38.2" rx="1.0" ry=".5" fill="#5f78ab" transform="rotate(-20 18.8 38.2)"/><ellipse cx="25.1" cy="31.0" rx="1.3" ry=".5" fill="#7f93bd" transform="rotate(35 25.1 31.0)"/><ellipse cx="10.9" cy="36.1" rx="2.0" ry=".5" fill="#9fb0d0" transform="rotate(-30 10.9 36.1)"/><ellipse cx="31.4" cy="35.9" rx="1.8" ry=".5" fill="#5f78ab" transform="rotate(-30 31.4 35.9)"/><ellipse cx="30.4" cy="28.5" rx="1.8" ry=".5" fill="#9fb0d0" transform="rotate(35 30.4 28.5)"/><ellipse cx="10.6" cy="39.7" rx="1.8" ry=".5" fill="#9fb0d0" transform="rotate(-20 10.6 39.7)"/><ellipse cx="23.2" cy="22.2" rx="1.6" ry=".5" fill="#9fb0d0" transform="rotate(25 23.2 22.2)"/><ellipse cx="26.9" cy="30.3" rx="1.9" ry=".5" fill="#5f78ab" transform="rotate(25 26.9 30.3)"/><ellipse cx="13.9" cy="33.6" rx="1.8" ry=".5" fill="#9fb0d0" transform="rotate(25 13.9 33.6)"/><ellipse cx="36.9" cy="25.1" rx="2.0" ry=".5" fill="#9fb0d0" transform="rotate(25 36.9 25.1)"/><ellipse cx="38.3" cy="31.3" rx="1.5" ry=".5" fill="#7f93bd" transform="rotate(-20 38.3 31.3)"/></g></svg></div>
    <div class="c r ctr" style="left:587px;top:167px;width:110px"><span class="ls">3058</span></div>
    <div class="c r ctr" style="left:697px;top:167px;width:100px"><span class="tag i" style="left:22px;width:55px">trader</span></div>
    <div class="c r" style="left:797px;top:167px;width:80px"><span class="sw on"><i></i></span></div>
    <div class="c r" style="left:855px;top:167px;width:150px;z-index:2"><span class="act" style="left:19px;color:#1a5cff">编辑</span><span class="act" style="left:57px;color:#f53f3f">删除</span><span class="act" style="left:95px;color:#a8abb2">更多</span><svg class="abs" style="left:121px;top:27px" width="9" height="6" viewBox="0 0 9 6" fill="none" stroke="#a8abb2" stroke-width="1" stroke-linecap="round" stroke-linejoin="round"><path d="M.7.800l3.800 3.800L8.300.8"/></svg></div>
    <div class="c r" style="left:-1px;top:231px;width:48px"><span class="cb" style="top:25px"></span></div>
    <div class="c r" style="left:47px;top:231px;width:80px">4</div>
    <div class="c r" style="left:127px;top:231px;width:80px">顾芳</div>
    <div class="c r" style="left:207px;top:231px;width:300px">精达音二族关复那总层四备展立制太至张...</div>
    <div class="c r ctr" style="left:507px;top:231px;width:80px"><svg class="thumb" viewBox="0 0 40 40"><defs><linearGradient id="g4" x1="0" y1="0" x2="0" y2="1"><stop offset="0" stop-color="#14318f"/><stop offset=".45" stop-color="#1e4ab8"/></linearGradient><filter id="b4"><feGaussianBlur stdDeviation=".5"/></filter></defs><rect width="40" height="40" fill="url(#g4)"/><circle cx="29.2" cy="2.4" r=".35" fill="#6f8fe0"/><circle cx="39.6" cy="16.7" r=".35" fill="#6f8fe0"/><circle cx="33.5" cy="0.2" r=".35" fill="#6f8fe0"/><circle cx="25.0" cy="15.0" r=".35" fill="#6f8fe0"/><circle cx="17.2" cy="0.9" r=".35" fill="#6f8fe0"/><circle cx="26.6" cy="6.5" r=".35" fill="#6f8fe0"/><circle cx="20.2" cy="16.5" r=".35" fill="#6f8fe0"/><circle cx="24.0" cy="11.8" r=".35" fill="#6f8fe0"/><circle cx="1.8" cy="3.2" r=".35" fill="#6f8fe0"/><circle cx="10.8" cy="0.1" r=".35" fill="#6f8fe0"/><circle cx="14.6" cy="5.6" r=".35" fill="#6f8fe0"/><circle cx="39.4" cy="5.5" r=".35" fill="#6f8fe0"/><circle cx="1.4" cy="15.0" r=".35" fill="#6f8fe0"/><circle cx="8.7" cy="3.1" r=".35" fill="#6f8fe0"/><circle cx="13.4" cy="1.4" r=".35" fill="#6f8fe0"/><circle cx="11.2" cy="11.2" r=".35" fill="#6f8fe0"/><circle cx="9.9" cy="13.2" r=".35" fill="#6f8fe0"/><circle cx="3.6" cy="13.9" r=".35" fill="#6f8fe0"/><circle cx="5.8" cy="10.0" r=".35" fill="#6f8fe0"/><circle cx="15.8" cy="5.1" r=".35" fill="#6f8fe0"/><circle cx="25.2" cy="1.4" r=".35" fill="#6f8fe0"/><circle cx="38.3" cy="14.5" r=".35" fill="#6f8fe0"/><circle cx="6.2" cy="15.2" r=".35" fill="#6f8fe0"/><circle cx="31.4" cy="10.1" r=".35" fill="#6f8fe0"/><circle cx="30.6" cy="12.3" r=".35" fill="#6f8fe0"/><g filter="url(#b4)"><path d="M-1 18c5-2 10-1 14 0l4 2c6-3 14-3 24-2v24H-1z" fill="#c9935a"/><path d="M-1 18c5-2 10-1 14 0l3 3-17 2z" fill="#e3c79e"/><path d="M18 21c6-3 14-3 23-2v5l-18 2z" fill="#b9a58f"/><path d="M22 22c5-2 12-2 18-1v3l-14 1z" fill="#8f8a94"/><path d="M-1 24l18-1 6 4 18-2v16H-1z" fill="#b5673a"/><path d="M2 27l10-2 8 4-6 3zM20 30l12-3 8 2v4l-14 2zM0 34l14-1 10 4-24 3z" fill="#ead9c8"/><path d="M10 31l6 2-2 6-6-1zM28 34l8-1 2 6-8 1z" fill="#a3542c"/></g></svg></div>
    <div class="c r ctr" style="left:587px;top:231px;width:110px"><span class="ls">4997</span></div>
    <div class="c r ctr" style="left:697px;top:231px;width:100px"><span class="tag d" style="left:26px;width:47px">saler</span></div>
    <div class="c r" style="left:797px;top:231px;width:80px"><span class="sw"><i></i></span></div>
    <div class="c r" style="left:855px;top:231px;width:150px;z-index:2"><span class="act" style="left:19px;color:#1a5cff">编辑</span><span class="act" style="left:57px;color:#f53f3f">删除</span><span class="act" style="left:95px;color:#a8abb2">更多</span><svg class="abs" style="left:121px;top:27px" width="9" height="6" viewBox="0 0 9 6" fill="none" stroke="#a8abb2" stroke-width="1" stroke-linecap="round" stroke-linejoin="round"><path d="M.7.800l3.800 3.800L8.300.8"/></svg></div>
    <div class="c r" style="left:-1px;top:295px;width:48px"><span class="cb" style="top:25px"></span></div>
    <div class="c r" style="left:47px;top:295px;width:80px">5</div>
    <div class="c r" style="left:127px;top:295px;width:80px">袁强</div>
    <div class="c r" style="left:207px;top:295px;width:300px">基子展成能把众外次片使下段交与清社统...</div>
    <div class="c r ctr" style="left:507px;top:295px;width:80px"><svg class="thumb" viewBox="0 0 40 40"><defs><linearGradient id="g5" x1="0" y1="0" x2="0" y2="1"><stop offset="0" stop-color="#0b4a82"/><stop offset=".35" stop-color="#17609e"/><stop offset=".6" stop-color="#3f86bd"/></linearGradient><filter id="b5"><feGaussianBlur stdDeviation=".55"/></filter></defs><rect width="40" height="40" fill="url(#g5)"/><g filter="url(#b5)"><ellipse cx="19" cy="14" rx="2.500" ry=".7" fill="#3b7eb5"/><ellipse cx="26" cy="15.500" rx="2" ry=".6" fill="#3b7eb5"/><path d="M0 24c4-2 10-4 16-3v5H0z" fill="#dfe6f0"/><path d="M24 24c4-3 10-4 16-3v8H24z" fill="#f2f5f9"/><path d="M0 28l6-2 8-1 6-3 5 2 6-2 9 2v16H0z" fill="#8d979c"/><path d="M8 27l6-2 4-2 3 2-4 6zM24 25l8-2 8 3v4l-10 2z" fill="#e9edf0"/><path d="M26 28h8v3h-8z" fill="#fafbfc"/><path d="M0 32c8-2 14-1 20 0s14 0 20-2v10H0z" fill="#26342f"/><path d="M0 36c10-1 30-1 40 0v4H0z" fill="#16201d"/></g></svg></div>
    <div class="c r ctr" style="left:587px;top:295px;width:110px"><span class="ls">9712</span></div>
    <div class="c r ctr" style="left:697px;top:295px;width:100px"><span class="tag d" style="left:26px;width:47px">saler</span></div>
    <div class="c r" style="left:797px;top:295px;width:80px"><span class="sw"><i></i></span></div>
    <div class="c r" style="left:855px;top:295px;width:150px;z-index:2"><span class="act" style="left:19px;color:#1a5cff">编辑</span><span class="act" style="left:57px;color:#f53f3f">删除</span><span class="act" style="left:95px;color:#a8abb2">更多</span><svg class="abs" style="left:121px;top:27px" width="9" height="6" viewBox="0 0 9 6" fill="none" stroke="#a8abb2" stroke-width="1" stroke-linecap="round" stroke-linejoin="round"><path d="M.7.800l3.800 3.800L8.300.8"/></svg></div>
    <div class="c r" style="left:-1px;top:359px;width:48px"><span class="cb" style="top:25px"></span></div>
    <div class="c r" style="left:47px;top:359px;width:80px">6</div>
    <div class="c r" style="left:127px;top:359px;width:80px"></div>
    <div class="c r" style="left:207px;top:359px;width:300px"></div>
    <div class="c r ctr" style="left:507px;top:359px;width:80px"><svg class="thumb" viewBox="0 0 40 40"><defs><linearGradient id="g6" x1="0" y1="0" x2="1" y2="0"><stop offset="0" stop-color="#f0d089"/><stop offset=".5" stop-color="#ecdcae"/><stop offset="1" stop-color="#e6e2d2"/></linearGradient></defs><rect width="40" height="40" fill="url(#g6)"/></svg></div>
    <div class="c r ctr" style="left:587px;top:359px;width:110px"></div>
    <div class="c r ctr" style="left:697px;top:359px;width:100px"></div>
    <div class="c r" style="left:797px;top:359px;width:80px"><span class="sw"><i></i></span></div>
    <div class="c r" style="left:855px;top:359px;width:150px;z-index:2"><span class="act" style="left:19px;color:#1a5cff">编辑</span><span class="act" style="left:57px;color:#f53f3f">删除</span><span class="act" style="left:95px;color:#a8abb2">更多</span><svg class="abs" style="left:121px;top:27px" width="9" height="6" viewBox="0 0 9 6" fill="none" stroke="#a8abb2" stroke-width="1" stroke-linecap="round" stroke-linejoin="round"><path d="M.7.800l3.800 3.800L8.300.8"/></svg></div>
  </div>
</div>
<div id="pop" class="abs" style="left:1200px;top:341px;width:150px;height:122px;background:#fff;border:1px solid #e4e7ed;border-radius:4px;box-shadow:0 0 12px rgba(0,0,0,.12);z-index:20">
  <div class="abs" style="left:70px;top:-5px;width:8px;height:8px;background:#fff;border-left:1px solid #e4e7ed;border-top:1px solid #e4e7ed;transform:rotate(45deg)"></div>
  <div class="abs" style="left:12px;top:20px;width:14px;height:14px;border-radius:7px;border:1px solid #dcdfe6;background:#fff"></div>
  <div class="abs" style="left:34px;top:17px;font-size:14px;line-height:20px;color:#606266;white-space:nowrap">宽松<span class="ls">-large</span></div>
  <div class="abs" style="left:12px;top:52px;width:14px;height:14px;border-radius:7px;background:#1a5cff"><i class="abs" style="left:5px;top:5px;width:4px;height:4px;border-radius:2px;background:#fff"></i></div>
  <div class="abs" style="left:34px;top:49px;font-size:14px;line-height:20px;color:#1a5cff;white-space:nowrap">默认<span class="ls">-default</span></div>
  <div class="abs" style="left:12px;top:84px;width:14px;height:14px;border-radius:7px;border:1px solid #dcdfe6;background:#fff"></div>
  <div class="abs" style="left:34px;top:81px;font-size:14px;line-height:20px;color:#606266;white-space:nowrap">紧凑<span class="ls">-small</span></div>
</div>
<div class="abs" style="left:1358px;top:103px;width:6px;height:509px;border-radius:3px;background:#d4d5d8;z-index:30"></div>
</body>
</html>
